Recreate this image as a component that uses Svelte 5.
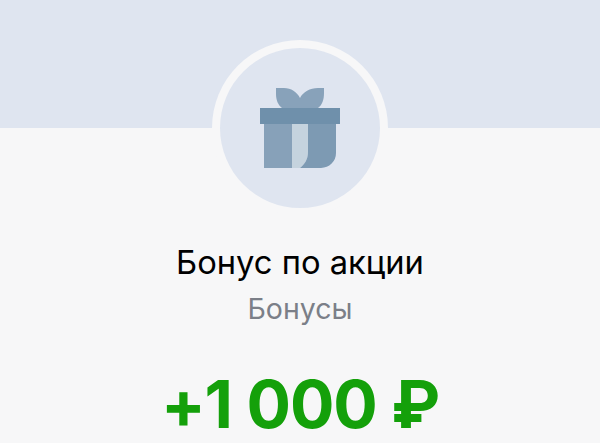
<script>
  const title = 'Бонус по акции';
  const category = 'Бонусы';
  const amount = '+1 000 ₽';
</script>

<main class="page">
  <div class="band"></div>
  <div class="ring">
    <div class="badge">
      <!-- gift box: bow, two-tone body with a ribbon, lid on top -->
      <svg width="80" height="80" viewBox="0 0 80 80" aria-hidden="true">
        <path d="M16 0h8c7 0 13 4 16 10 3-6 10-10 18-10h6v5c0 7-2 12-6 15H22c-4-3-6-8-6-14z" fill="#88a2ba"/>
        <path d="M4 36h28v44H4z" fill="#87a1b9"/>
        <path d="M32 36h16v28c0 7-3 12-8 16h-8z" fill="#c5d3de"/>
        <path d="M48 36h28v29a15 15 0 0 1-15 15H40c5-4 8-9 8-16z" fill="#7d9ab3"/>
        <rect y="20" width="80" height="16" fill="#6f90ab"/>
      </svg>
    </div>
  </div>

  <h1 class="title">{title}</h1>
  <p class="category">{category}</p>
  <p class="amount">{amount}</p>
</main>

<style>
  :global(body) {
    margin: 0;
    background: #f7f7f8;
  }

  .page {
    height: 443px;
    display: flex;
    flex-direction: column;
    align-items: center;
    font-family: Inter, "Liberation Sans", sans-serif;
    background: #f7f7f8;
  }

  .band {
    align-self: stretch;
    flex: none;
    height: 128px;
    background: #dfe5f0;
  }

  .ring {
    flex: none;
    width: 160px;
    height: 160px;
    margin-top: -88px;
    padding: 8px;
    border-radius: 50%;
    background: #f7f7f8;
  }

  .badge {
    width: 160px;
    height: 160px;
    border-radius: 50%;
    background: #dfe5f0;
    display: flex;
    align-items: center;
    justify-content: center;
  }

  .title {
    flex: none;
    margin: 22px 0 0;
    font-size: 32.700px;
    line-height: 48px;
    font-weight: 400;
    color: #000;
  }

  .category {
    flex: none;
    margin: -1px 0 0;
    font-size: 28.500px;
    line-height: 48px;
    font-weight: 400;
    color: #7b7f88;
  }

  .amount {
    flex: none;
    margin: 43px 0 0;
    font-size: 66px;
    line-height: 56px;
    font-weight: 700;
    letter-spacing: -1.100px;
    color: #14a00a;
    white-space: nowrap;
  }
</style>
